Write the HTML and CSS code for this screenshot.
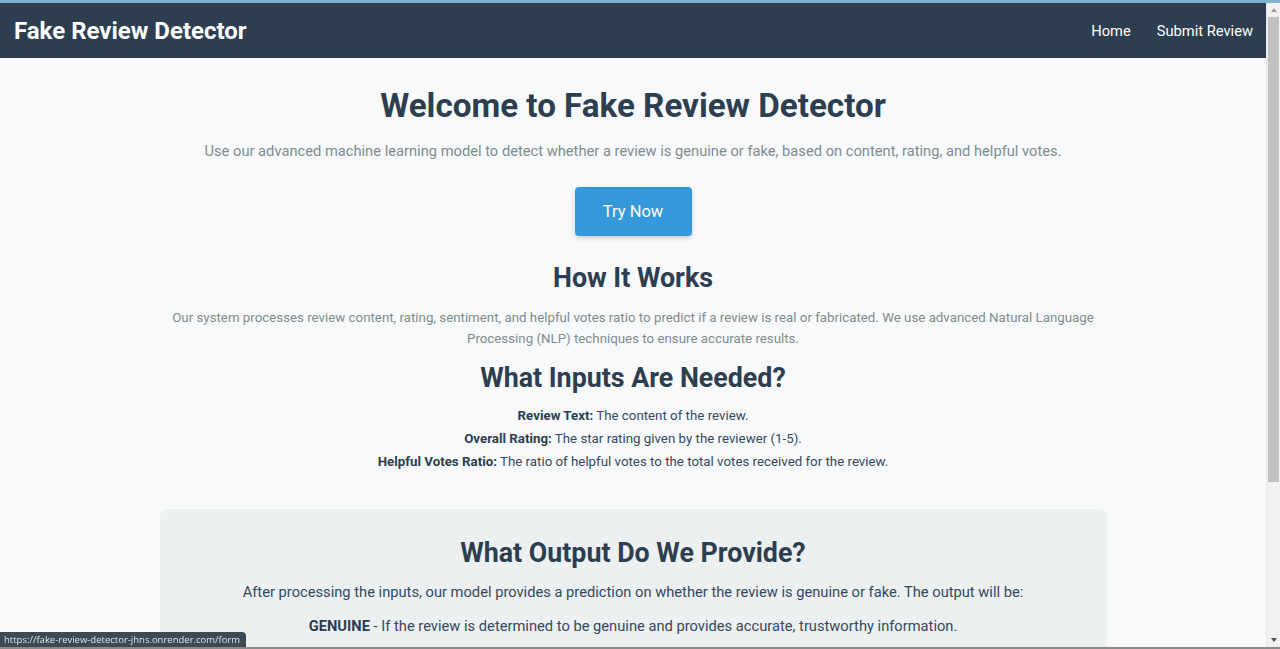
FILE: index.html
```html
<!DOCTYPE html>
<html lang="en">
<head>
<meta charset="utf-8">
<title>Fake Review Detector</title>
<link rel="stylesheet" href="styles.css">
</head>
<body>
<div class="topline"></div>
<div class="window">
  <div class="page">
    <header class="navbar">
      <div class="brand">Fake Review Detector</div>
      <nav class="links">
        <a href="#">Home</a>
        <a href="#">Submit Review</a>
      </nav>
    </header>
    <main class="container">
      <section class="hero">
        <h1>Welcome to Fake Review Detector</h1>
        <p class="lead">Use our advanced machine learning model to detect whether a review is genuine or fake, based on content, rating, and helpful votes.</p>
        <a class="btn" href="#">Try Now</a>
      </section>
      <section class="info">
        <h2>How It Works</h2>
        <p class="muted">Our system processes review content, rating, sentiment, and helpful votes ratio to predict if a review is real or fabricated. We use advanced Natural Language Processing (NLP) techniques to ensure accurate results.</p>
        <h2 class="inputs-title">What Inputs Are Needed?</h2>
        <ul class="inputs">
          <li><strong>Review Text:</strong> The content of the review.</li>
          <li><strong>Overall Rating:</strong> The star rating given by the reviewer (1-5).</li>
          <li><strong>Helpful Votes Ratio:</strong> The ratio of helpful votes to the total votes received for the review.</li>
        </ul>
      </section>
      <section class="card">
        <h2>What Output Do We Provide?</h2>
        <p>After processing the inputs, our model provides a prediction on whether the review is genuine or fake. The output will be:</p>
        <p><strong>GENUINE</strong> - If the review is determined to be genuine and provides accurate, trustworthy information.</p>
        <p><strong>FAKE</strong> - If the review is determined to be fabricated or misleading.</p>
      </section>
    </main>
  </div>
  <div class="scrollbar">
    <span class="arrow up"></span>
    <span class="thumb"></span>
    <span class="track"></span>
    <span class="arrow down"></span>
  </div>
</div>
<div class="bottomline"></div>
<div class="status">https://fake-review-detector-jhns.onrender.com/form</div>
</body>
</html>
```
FILE: styles.css
```css
html, body {
  margin: 0;
  padding: 0;
  height: 100%;
  overflow: hidden;
}
body {
  background: #f8f9fa;
  font-family: Roboto, "Noto Sans", Arial, sans-serif;
  color: #34495e;
  display: flex;
  flex-direction: column;
}
.topline {
  height: 3px;
  background: #7fb1cf;
  flex: none;
}
.window {
  flex: 1;
  display: flex;
  min-height: 0;
}
.page {
  flex: 1;
  overflow: hidden;
}
.bottomline {
  height: 2px;
  background: #8a8a8a;
  flex: none;
}
.scrollbar {
  width: 13px;
  background: #f1f1f1;
  display: flex;
  flex-direction: column;
  align-items: center;
  border-left: 1px solid #e8e8e8;
}
.arrow {
  height: 14px;
  width: 13px;
  display: flex;
  align-items: center;
  justify-content: center;
  flex: none;
}
.arrow::before {
  content: "";
  width: 0;
  height: 0;
  border-left: 3.5px solid transparent;
  border-right: 3.5px solid transparent;
}
.arrow.up::before {
  border-bottom: 4px solid #a3a3a3;
}
.arrow.down::before {
  border-top: 4px solid #505050;
}
.thumb {
  width: 11px;
  height: 465px;
  background: #c1c1c1;
  flex: none;
}
.track {
  flex: 1;
}
.navbar {
  background: #2c3e50;
  height: 55px;
  display: flex;
  align-items: center;
  justify-content: space-between;
  padding: 0 13px 0 14px;
}
.brand {
  color: #fff;
  font-size: 24px;
  font-weight: 700;
}
.links {
  display: flex;
  gap: 26px;
}
.links a {
  color: #fff;
  text-decoration: none;
  font-size: 14.7px;
}
.container {
  width: 947px;
  margin: 0 auto;
  text-align: center;
}
.hero {
  padding-top: 28px;
}
h1 {
  font-size: 33.2px;
  font-weight: 700;
  color: #2c3e50;
  margin: 0 0 15px;
  line-height: 40px;
}
.lead {
  font-size: 14.7px;
  color: #7f8c8d;
  margin: 0 -60px 26px;
  line-height: 20px;
}
.btn {
  display: inline-block;
  background: #3498db;
  color: #fff;
  text-decoration: none;
  font-size: 16.5px;
  width: 117px;
  height: 49px;
  line-height: 49px;
  border-radius: 4px;
  box-shadow: 0 2px 5px rgba(0,0,0,0.18);
}
h2 {
  font-size: 26.8px;
  font-weight: 700;
  color: #2c3e50;
  margin: 0;
  line-height: 34px;
}
.info {
  padding-top: 25px;
}
.muted {
  color: #7f8c8d;
  font-size: 13.3px;
  line-height: 21px;
  margin: 12px -10px 0;
}
.inputs-title {
  margin-top: 12px;
}
.inputs {
  list-style: none;
  margin: 9px 0 0;
  padding: 0;
  font-size: 13.3px;
  line-height: 23px;
  color: #34495e;
}
.inputs strong {
  color: #2c3e50;
}
.card {
  margin-top: 36px;
  background: #ecf0f1;
  border-radius: 8px;
  padding: 27px 20px 20px;
}
.card p {
  font-size: 14.7px;
  color: #34495e;
  line-height: 20px;
  margin: 12px 0 14px;
}
.card strong {
  color: #2c3e50;
}
.status {
  position: fixed;
  left: 0;
  bottom: 2px;
  background: #3b4a55;
  color: #dfe6ea;
  font-size: 9.5px;
  line-height: 15px;
  padding: 0 6px 0 4px;
  border-top-right-radius: 4px;
  font-family: "Open Sans", "Noto Sans", Arial, sans-serif;
}
```
